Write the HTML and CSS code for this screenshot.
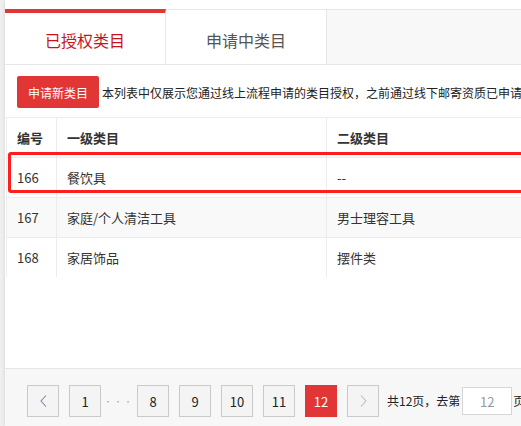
FILE: index.html
```html
<!DOCTYPE html>
<html lang="zh-CN">
<head>
<meta charset="utf-8">
<title>类目管理</title>
<link rel="stylesheet" href="styles.css">
</head>
<body>
<div class="page">
  <div class="top-gap"></div>
  <div class="tabs">
    <div class="tab active">已授权类目</div>
    <div class="tab">申请中类目</div>
  </div>
  <div class="panel">
    <div class="toolbar">
      <button class="btn-apply" type="button">申请新类目</button>
      <span class="notice">本列表中仅展示您通过线上流程申请的类目授权，之前通过线下邮寄资质已申请的类目授权请联系客服查询</span>
    </div>
    <div class="table-wrap">
      <table class="cat-table">
        <thead>
          <tr>
            <th class="c-no">编号</th>
            <th class="c-l1">一级类目</th>
            <th class="c-l2">二级类目</th>
          </tr>
        </thead>
        <tbody>
          <tr>
            <td>166</td>
            <td>餐饮具</td>
            <td>--</td>
          </tr>
          <tr class="alt">
            <td>167</td>
            <td>家庭/个人清洁工具</td>
            <td>男士理容工具</td>
          </tr>
          <tr>
            <td>168</td>
            <td>家居饰品</td>
            <td>摆件类</td>
          </tr>
        </tbody>
      </table>
      <div class="highlight"></div>
    </div>
    <div class="pager">
      <span class="pg-btn pg-prev"><svg width="7" height="12" viewBox="0 0 7 12"><polyline points="6,0.5 1,6 6,11.5" fill="none" stroke="#7d8ea6" stroke-width="1.1"/></svg></span>
      <span class="pg-btn">1</span>
      <span class="pg-dots">···</span>
      <span class="pg-btn">8</span>
      <span class="pg-btn">9</span>
      <span class="pg-btn">10</span>
      <span class="pg-btn">11</span>
      <span class="pg-btn current">12</span>
      <span class="pg-btn pg-next"><svg width="7" height="12" viewBox="0 0 7 12"><polyline points="1,0.5 6,6 1,11.5" fill="none" stroke="#bdbdbd" stroke-width="1.1"/></svg></span>
      <span class="pg-text">共12页，去第</span>
      <span class="pg-input">12</span>
      <span class="pg-text pg-tail">页</span>
    </div>
  </div>
</div>
</body>
</html>
```
FILE: styles.css
```css
* {
  box-sizing: border-box;
}

html, body {
  margin: 0;
  padding: 0;
  overflow: hidden;
  background: #efefef;
}

body {
  font-family: "Noto Sans CJK SC", "Noto Sans", sans-serif;
  color: #333;
  font-size: 12px;
}

.page {
  margin-left: 5px;
  width: 900px;
  height: 426px;
  overflow: hidden;
  background: #fff;
  box-shadow: -1px 0 3px rgba(0, 0, 0, 0.08);
}

.top-gap {
  height: 9px;
}

.tabs {
  display: flex;
  height: 56px;
  border-top: 1px solid #e6e6e6;
  border-bottom: 1px solid #e6e6e6;
  background: #f8f8f8;
}

.tab {
  width: 161px;
  height: 54px;
  padding-top: 5px;
  border-right: 1px solid #e6e6e6;
  background: #fff;
  display: flex;
  align-items: center;
  justify-content: center;
  font-size: 16px;
  color: #555;
}

.tab.active {
  margin-top: -1px;
  height: 55px;
  padding-top: 2px;
  border-top: 4px solid #e23636;
  color: #c8131c;
}

.panel {
  padding-top: 11px;
}

.toolbar {
  display: flex;
  align-items: center;
  gap: 3px;
  padding-left: 12px;
  height: 32px;
  white-space: nowrap;
}

.btn-apply {
  width: 82px;
  height: 32px;
  border: none;
  border-radius: 2px;
  background: #e23636;
  color: #fff;
  font-family: inherit;
  font-size: 12px;
  padding: 0;
}

.notice {
  font-size: 12px;
  color: #222;
}

.table-wrap {
  position: relative;
  margin-top: 9px;
  margin-left: 1px;
}

.cat-table {
  border-collapse: separate;
  border-spacing: 0;
  table-layout: fixed;
  width: 890px;
  border-top: 1px solid #ececec;
}

.cat-table th,
.cat-table td {
  text-align: left;
  padding: 0 0 0 10px;
  border-left: 1px solid #ececec;
  font-size: 13px;
  color: #333;
  white-space: nowrap;
}

.cat-table th {
  height: 39px;
  font-weight: 700;
  color: #333;
}

.cat-table td {
  height: 40px;
  border-top: 1px solid #ececec;
  font-weight: 400;
}

.cat-table .c-no {
  width: 50px;
}

.cat-table .c-l1 {
  width: 270px;
}

.cat-table tr.alt td {
  background: #f9f9f9;
}

.highlight {
  position: absolute;
  left: 2px;
  top: 35px;
  width: 700px;
  height: 41px;
  border: 3px solid #ff1d1d;
  border-radius: 3px;
  pointer-events: none;
}

.pager {
  margin-top: 91px;
  height: 59px;
  border-top: 1px solid #e6e6e6;
  background: #f7f7f7;
  padding: 16px 0 0 22px;
  display: flex;
  align-items: flex-start;
  white-space: nowrap;
}

.pg-btn {
  width: 32px;
  height: 32px;
  border: 1px solid #cacaca;
  background: #f4f4f4;
  display: flex;
  align-items: center;
  justify-content: center;
  font-size: 13px;
  color: #222;
  margin-right: 10px;
  flex: none;
}

.pg-btn.current {
  background: #e23636;
  border-color: #e23636;
  color: #fff;
}

.pg-dots {
  width: 16px;
  height: 32px;
  margin-right: 10px;
  display: flex;
  align-items: center;
  justify-content: center;
  color: #aaa;
  font-size: 8px;
  letter-spacing: 2px;
}

.pg-next {
  margin-right: 8px;
}

.pg-text {
  height: 32px;
  line-height: 32px;
  font-size: 12px;
  color: #222;
}

.pg-input {
  margin: 2px 1px 0 2px;
  width: 50px;
  height: 28px;
  border: 1px solid #d6d6d6;
  background: #fff;
  display: flex;
  align-items: center;
  justify-content: center;
  font-size: 13px;
  color: #999;
}
```
